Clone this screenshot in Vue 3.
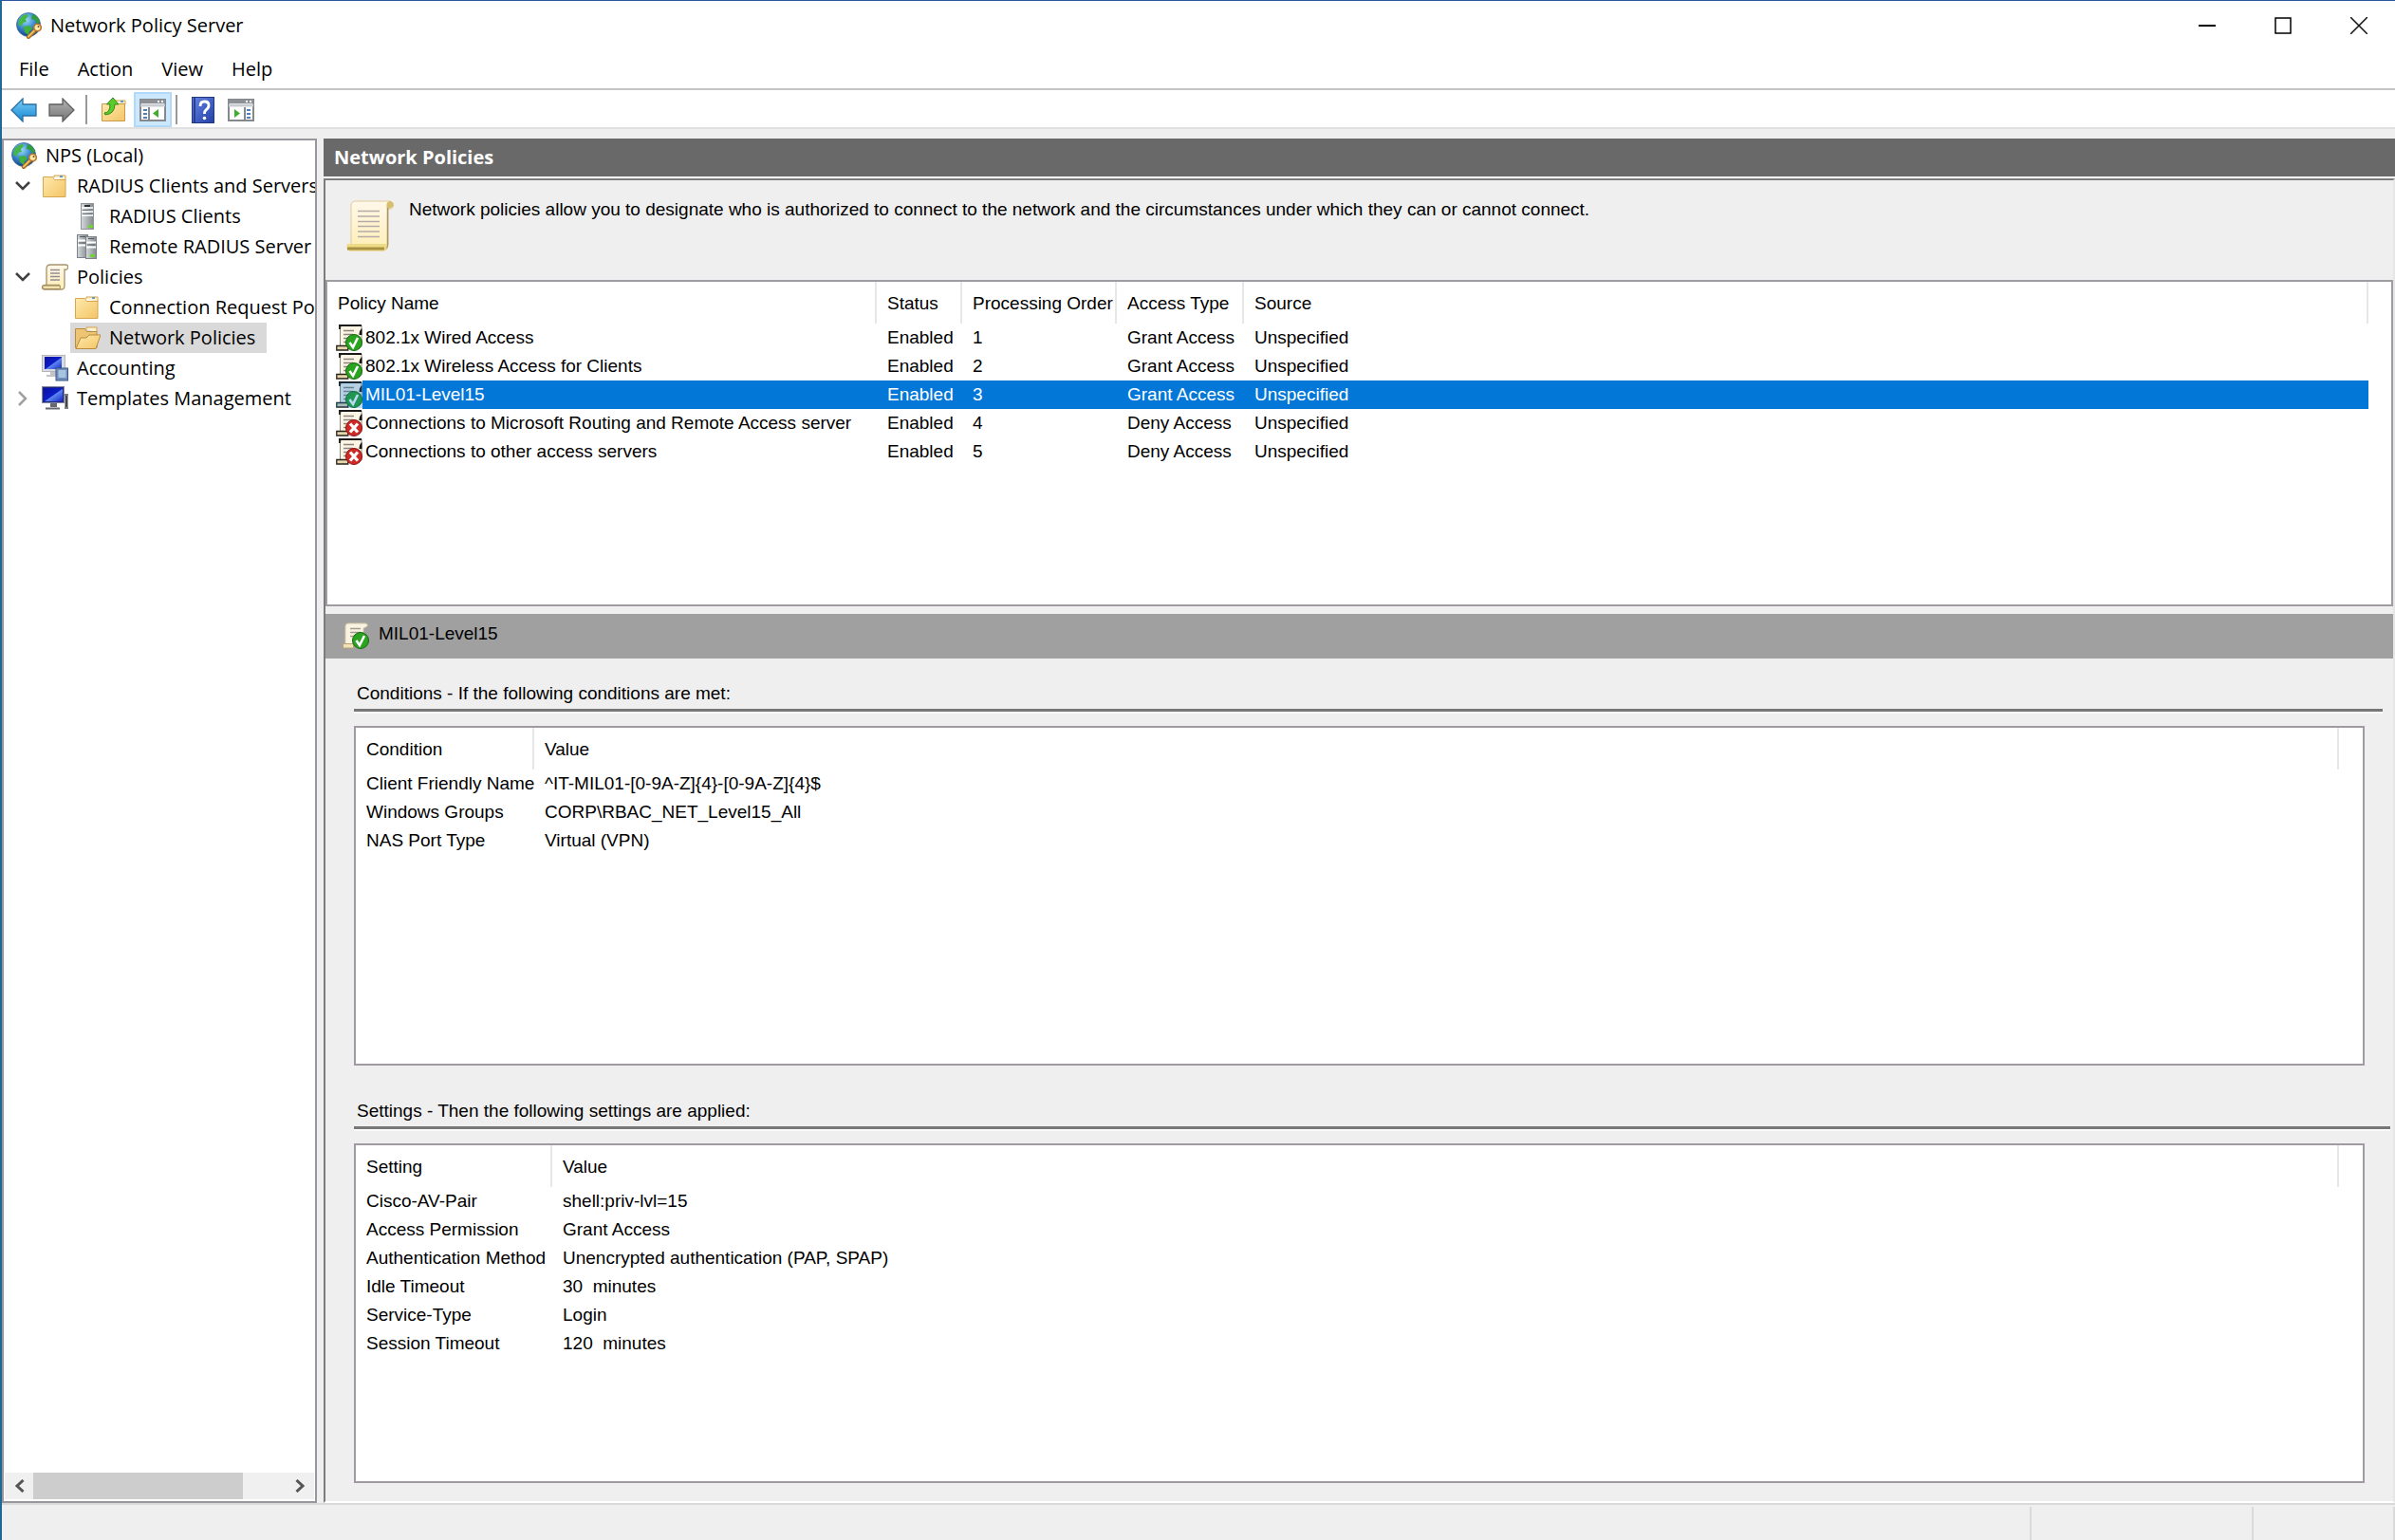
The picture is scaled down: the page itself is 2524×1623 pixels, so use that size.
<script setup>
import { ref } from 'vue'

const menus = ['File', 'Action', 'View', 'Help']

const tree = [
  { label: 'NPS (Local)', icon: 'globe', level: 0 },
  { label: 'RADIUS Clients and Servers', icon: 'folder', level: 1, toggle: 'open' },
  { label: 'RADIUS Clients', icon: 'server', level: 2 },
  { label: 'Remote RADIUS Server Groups', icon: 'servers', level: 2 },
  { label: 'Policies', icon: 'scroll', level: 1, toggle: 'open' },
  { label: 'Connection Request Policies', icon: 'folder', level: 2 },
  { label: 'Network Policies', icon: 'folder-open', level: 2, selected: true },
  { label: 'Accounting', icon: 'accounting', level: 1 },
  { label: 'Templates Management', icon: 'templates', level: 1, toggle: 'closed' },
]

const policies = [
  { name: '802.1x Wired Access', status: 'Enabled', order: 1, access: 'Grant Access', source: 'Unspecified' },
  { name: '802.1x Wireless Access for Clients', status: 'Enabled', order: 2, access: 'Grant Access', source: 'Unspecified' },
  { name: 'MIL01-Level15', status: 'Enabled', order: 3, access: 'Grant Access', source: 'Unspecified' },
  { name: 'Connections to Microsoft Routing and Remote Access server', status: 'Enabled', order: 4, access: 'Deny Access', source: 'Unspecified' },
  { name: 'Connections to other access servers', status: 'Enabled', order: 5, access: 'Deny Access', source: 'Unspecified' },
]
const selected = ref(3)

const conditions = [
  ['Client Friendly Name', '^IT-MIL01-[0-9A-Z]{4}-[0-9A-Z]{4}$'],
  ['Windows Groups', 'CORP\\RBAC_NET_Level15_All'],
  ['NAS Port Type', 'Virtual (VPN)'],
]

const settings = [
  ['Cisco-AV-Pair', 'shell:priv-lvl=15'],
  ['Access Permission', 'Grant Access'],
  ['Authentication Method', 'Unencrypted authentication (PAP, SPAP)'],
  ['Idle Timeout', '30  minutes'],
  ['Service-Type', 'Login'],
  ['Session Timeout', '120  minutes'],
]
</script>

<template>
  <div class="window">
    <svg class="sprites" width="0" height="0" aria-hidden="true">
      <defs>
        <radialGradient id="g-globe" cx="40%" cy="30%" r="70%">
          <stop offset="0" stop-color="#9fdcf7" /><stop offset=".5" stop-color="#3f8fd6" /><stop offset="1" stop-color="#123f86" />
        </radialGradient>
        <linearGradient id="g-folder" x1="0" y1="0" x2="1" y2="1">
          <stop offset="0" stop-color="#ffe9ac" /><stop offset="1" stop-color="#f3c566" />
        </linearGradient>
        <linearGradient id="g-server" x1="0" y1="0" x2="1" y2="0">
          <stop offset="0" stop-color="#d5dadd" /><stop offset="1" stop-color="#82898f" />
        </linearGradient>
        <linearGradient id="g-paper" x1="0" y1="0" x2="0" y2="1">
          <stop offset="0" stop-color="#fff8ea" /><stop offset="1" stop-color="#ffeeb4" />
        </linearGradient>
        <linearGradient id="g-screen" x1="0" y1="0" x2="1" y2="1">
          <stop offset="0" stop-color="#0a12a0" /><stop offset=".5" stop-color="#0c1cc8" /><stop offset=".55" stop-color="#5c86f0" /><stop offset="1" stop-color="#1626c8" />
        </linearGradient>
        <linearGradient id="g-back" x1="0" y1="0" x2="0" y2="1">
          <stop offset="0" stop-color="#7ccdf6" /><stop offset="1" stop-color="#1288d2" />
        </linearGradient>
        <linearGradient id="g-fwd" x1="0" y1="0" x2="0" y2="1">
          <stop offset="0" stop-color="#b4b4b4" /><stop offset="1" stop-color="#747474" />
        </linearGradient>
        <linearGradient id="g-help" x1="0" y1="0" x2="1" y2="1">
          <stop offset="0" stop-color="#6684e2" /><stop offset="1" stop-color="#2340a8" />
        </linearGradient>
      </defs>

      <symbol id="i-globe" viewBox="0 0 28 28">
        <circle cx="14" cy="13" r="12.500" fill="url(#g-globe)" stroke="#3a6a9a" stroke-width=".8" />
        <path d="M4 8c2-4 6-6 9-6l1 2-3 3 1 3-4 1-1 4-4-2z" fill="#47b649" />
        <path d="M18 2c4 1 7 4 8 8l-3 2-2-4-4-1z" fill="#2f9d3a" />
        <path d="M9 15l6-1 3 3-3 3-1 4-4-3z" fill="#3fb03a" />
        <path d="M14 26l8-8" stroke="#a8661c" stroke-width="4" stroke-linecap="round" />
        <path d="M14 25.500l8-8" stroke="#f2bf5e" stroke-width="2" stroke-linecap="round" />
        <circle cx="23.500" cy="16" r="3.800" fill="#ffe7a8" stroke="#b5742a" stroke-width="1.600" />
        <circle cx="24.500" cy="15" r="1" fill="#7a4a18" />
      </symbol>
      <symbol id="i-folder" viewBox="0 0 28 28">
        <path d="M13 5V3h12v5" fill="#fff3cf" stroke="#d5a24a" />
        <rect x="19" y="3" width="3" height="2" fill="#5b9bd0" />
        <path d="M1.500 4.500h10l2 3h11.500v18H1.500z" fill="url(#g-folder)" stroke="#d6a650" />
      </symbol>
      <symbol id="i-folder-open" viewBox="0 0 28 28">
        <path d="M13 5V3h11v5" fill="#fff3cf" stroke="#d5a24a" />
        <path d="M1.500 4.500h10l2 3h10.500v17H1.500z" fill="#ecc473" stroke="#b98b3c" />
        <path d="M2 25.500L7 14h6l3-3h12l-5 14.500z" fill="url(#g-folder)" stroke="#b98b3c" />
      </symbol>
      <symbol id="i-server" viewBox="0 0 28 28">
        <rect x="7.500" y=".5" width="13" height="27" fill="url(#g-server)" stroke="#8e9499" />
        <path d="M8 5h12M8 9h12M8 13h12" stroke="#fff" stroke-width="1.500" />
        <path d="M11 3h6" stroke="#2c3236" stroke-width="2" />
        <path d="M9 7.500h10M9 11.500h10" stroke="#6e767c" />
        <rect x="15" y="23" width="5" height="3" fill="#6fd42c" />
      </symbol>
      <symbol id="i-servers" viewBox="0 0 28 28">
        <rect x="3.500" y="1.500" width="11" height="24" fill="url(#g-server)" stroke="#7c8388" />
        <path d="M4 7.500h10M4 12.500h10" stroke="#fff" stroke-width="2" />
        <path d="M6 3.500h6M5 10h8" stroke="#4e565c" />
        <rect x="12.500" y="3.500" width="11" height="23" fill="url(#g-server)" stroke="#7c8388" />
        <path d="M13 9.500h10M13 14.500h10" stroke="#fff" stroke-width="2" />
        <path d="M15 5.500h6M14 12h8" stroke="#4e565c" />
        <rect x="17" y="22" width="5" height="3" fill="#6fd42c" />
      </symbol>
      <symbol id="i-scroll" viewBox="0 0 28 28">
        <path d="M5 24V5q0-4 4-4h16q3 0 2.500 3T24 6v17q0 4-3 4H3q-2.500 0-2.500-2T3 22.500h16" fill="url(#g-paper)" stroke="#a5936f" stroke-width="1.300" />
        <path d="M.8 23h18.500v3.500H2q-1.500-1-1.200-3.500z" fill="#f3e2ae" stroke="#a08a5c" />
        <path d="M9 6.500h10M9 10h10M9 13.500h10M9 17h10" stroke="#958a94" stroke-width="1.300" />
      </symbol>
      <symbol id="i-scroll-lg" viewBox="0 0 50 54">
        <path d="M5 46V6q0-5 5-5h36q4 1 3.500 5T44 9v38q0 5-4 6H3" fill="url(#g-paper)" stroke="#e0ca9a" />
        <path d="M43 9q-2-6 2-8 5 0 4.500 5-2 3-6.500 3z" fill="#d6bf6c" />
        <path d="M43.500 8v38q0 5-4 6" fill="none" stroke="#a89468" stroke-width="1.500" />
        <path d="M.5 46h42v5q-1 2.500-3 2.500H3q-3-1-2.500-7.500z" fill="#eedb86" />
        <path d="M1 51h39" stroke="#a89142" stroke-width="3" />
        <path d="M12 11.500h23M12 17h23M12 22.500h23M12 27.500h23M12 33h23M12 38.500h23" stroke="#b5aaa8" stroke-width="1.500" />
      </symbol>
      <symbol id="i-accounting" viewBox="0 0 28 28">
        <rect x=".5" y=".5" width="24" height="17" fill="#d9dade" stroke="#b6b7bd" />
        <rect x="3" y="2" width="18" height="13" fill="url(#g-screen)" />
        <path d="M9 18h7v3H9zM5 21h12v2H5z" fill="#c4c4c8" />
        <rect x="15" y="14" width="12.500" height="13" fill="#6f8fba" stroke="#3c5a86" />
        <rect x="17.500" y="16" width="8" height="8" fill="#a9c3e2" />
      </symbol>
      <symbol id="i-templates" viewBox="0 0 28 28">
        <rect x=".5" y="1.500" width="23" height="17" fill="#20267a" stroke="#8488a8" />
        <rect x="2" y="3" width="20" height="14" fill="url(#g-screen)" />
        <path d="M9 19h7v4H9zM4 23.500h15v2H4z" fill="#66686e" />
        <path d="M26 9v16" stroke="#44464c" stroke-width="3" />
        <path d="M24 10h4M24 24h4" stroke="#7a7c82" stroke-width="2" />
      </symbol>
      <symbol id="i-policy" viewBox="0 0 28 28">
        <path class="paper" d="M4.500 24V4q0-3 3-3H27v22H4.500" fill="#fbf5e6" stroke="#8d8878" />
        <path d="M3 1h24M4 1v4" fill="none" stroke="#1c1a18" stroke-width="1.800" />
        <path d="M27.500 4v7h-3q0-5 3-7z" fill="#17140f" />
        <path d="M8 6.500h11M8 10.500h10M8 14.500h8M8 18.500h4" stroke="#8e857e" stroke-width="1.300" />
        <path d="M.8 22.500h12v4.500H.8z" fill="#e6d6ae" stroke="#2a241a" stroke-width="1.300" />
      </symbol>
      <symbol id="i-policy-soft" viewBox="0 0 28 28">
        <path d="M3 24V4q0-3 3-3h17q4 0 3 3l-4 2v18" fill="#fbf3e2" stroke="#d6c8a8" />
        <path d="M8 6.500h11M8 10.500h11M8 14.500h8" stroke="#a49a94" stroke-width="1.300" />
        <path d="M.5 22.500h11v4.500H.5z" fill="#f1e1b8" stroke="#b8a070" />
      </symbol>
      <symbol id="i-grant" viewBox="0 0 28 28">
        <circle cx="19" cy="19" r="8.500" fill="#2aa31f" stroke="#17690f" />
        <path d="M14.500 19l3.500 5 5-10" fill="none" stroke="#fff" stroke-width="2.600" />
      </symbol>
      <symbol id="i-deny" viewBox="0 0 28 28">
        <circle cx="19" cy="19" r="8.500" fill="#cf2a26" stroke="#8c1412" />
        <path d="M15 14.500l8 9M23 14.500l-8 9" stroke="#fff" stroke-width="3.200" />
      </symbol>
      <symbol id="i-tint" viewBox="0 0 28 28">
        <path d="M4 1h24v27H12v-1H0v-5h4z" fill="#0377d8" opacity=".28" />
      </symbol>
      <symbol id="i-back" viewBox="0 0 28 26">
        <path d="M1 13L13 1v6h14v12H13v6z" fill="url(#g-back)" stroke="#2a6fa4" stroke-width="1.300" />
      </symbol>
      <symbol id="i-fwd" viewBox="0 0 28 26">
        <path d="M27 13L15 1v6H1v12h14v6z" fill="url(#g-fwd)" stroke="#5e5e5e" stroke-width="1.300" />
      </symbol>
      <symbol id="i-up" viewBox="0 0 28 28">
        <path d="M14 6V4h11v4" fill="#fff3cf" stroke="#d5a24a" />
        <rect x="20" y="4" width="3" height="2" fill="#5b9bd0" />
        <path d="M.5 7.500h24v18H.5z" fill="url(#g-folder)" stroke="#c89a48" />
        <path d="M3 17q6 0 6-9H5.500L12 1l6 7h-4q0 10-10 11z" fill="#5ccb2c" stroke="#2f8a16" />
      </symbol>
      <symbol id="i-pane-left" viewBox="0 0 28 24">
        <rect x="1" y="1" width="26" height="22" fill="#fff" stroke="#85888c" stroke-width="2" />
        <path d="M1 3h26" stroke="#8d9196" stroke-width="4" />
        <path d="M19 3h2M23 3h2" stroke="#fff" stroke-width="2" />
        <path d="M1 7h26" stroke="#c9ccd0" stroke-width="3" />
        <path d="M10 9v13" stroke="#85888c" stroke-width="2" />
        <path d="M4 12h4M4 16h4M4 20h4" stroke="#4f7fb8" stroke-width="2" />
        <path d="M20 11v9l-6-4.500z" fill="#3fae2c" />
      </symbol>
      <symbol id="i-pane-right" viewBox="0 0 28 24">
        <rect x="1" y="1" width="26" height="22" fill="#fff" stroke="#85888c" stroke-width="2" />
        <path d="M1 3h26" stroke="#8d9196" stroke-width="4" />
        <path d="M19 3h2M23 3h2" stroke="#fff" stroke-width="2" />
        <path d="M1 7h26" stroke="#c9ccd0" stroke-width="3" />
        <path d="M18 9v13" stroke="#85888c" stroke-width="2" />
        <path d="M20 12h4M20 16h4M20 20h4" stroke="#4f7fb8" stroke-width="2" />
        <path d="M7 11v9l6-4.500z" fill="#3fae2c" />
      </symbol>
      <symbol id="i-help" viewBox="0 0 24 28">
        <rect x=".5" y=".5" width="23" height="27" fill="url(#g-help)" stroke="#22367c" />
        <path d="M3 1v26" stroke="#24409c" stroke-width="2" />
        <path d="M9 10q0-5 4.500-5t4.500 4q0 3-3 5-1.500 1-1.500 4" fill="none" stroke="#fff" stroke-width="2.800" />
        <circle cx="13.500" cy="22.500" r="1.800" fill="#fff" />
      </symbol>
    </svg>

    <header class="titlebar">
      <svg class="icon"><use href="#i-globe" /></svg>
      <h1>Network Policy Server</h1>
      <div class="controls">
        <button type="button" aria-label="Minimize">
          <svg width="18" height="18" viewBox="0 0 18 18"><path d="M0 9h18" stroke="#000" stroke-width="2" /></svg>
        </button>
        <button type="button" aria-label="Maximize">
          <svg width="18" height="18" viewBox="0 0 18 18"><rect x="1" y="1" width="16" height="16" fill="none" stroke="#000" stroke-width="1.500" /></svg>
        </button>
        <button type="button" aria-label="Close">
          <svg width="18" height="18" viewBox="0 0 18 18"><path d="M0 0l18 18M18 0L0 18" stroke="#111" stroke-width="1.500" /></svg>
        </button>
      </div>
    </header>

    <nav class="menubar">
      <button v-for="m in menus" :key="m" type="button">{{ m }}</button>
    </nav>

    <div class="toolbar" role="toolbar">
      <button type="button" aria-label="Back"><svg width="28" height="26"><use href="#i-back" /></svg></button>
      <button type="button" aria-label="Forward"><svg width="28" height="26"><use href="#i-fwd" /></svg></button>
      <span class="divider"></span>
      <button type="button" aria-label="Up one level"><svg class="icon"><use href="#i-up" /></svg></button>
      <button type="button" class="active" aria-label="Show or hide console tree"><svg width="28" height="24"><use href="#i-pane-left" /></svg></button>
      <span class="divider tight"></span>
      <button type="button" aria-label="Help"><svg width="24" height="28"><use href="#i-help" /></svg></button>
      <button type="button" aria-label="Show or hide action pane"><svg width="28" height="24"><use href="#i-pane-right" /></svg></button>
    </div>

    <div class="body">
      <aside class="sidebar">
        <ul class="tree" role="tree">
          <li v-for="n in tree" :key="n.label" role="treeitem" :class="['node', 'level-' + n.level, { selected: n.selected }]">
            <span class="toggle">
              <svg v-if="n.toggle === 'open'" width="16" height="10" viewBox="0 0 16 10"><path d="M1 1l7 7 7-7" fill="none" stroke="#404040" stroke-width="2.500" /></svg>
              <svg v-else-if="n.toggle" width="10" height="16" viewBox="0 0 10 16"><path d="M1 1l7 7-7 7" fill="none" stroke="#a0a0a0" stroke-width="2.500" /></svg>
            </span>
            <span class="entry">
              <svg class="icon"><use :href="'#i-' + n.icon" /></svg>
              <span>{{ n.label }}</span>
            </span>
          </li>
        </ul>
        <div class="scrollbar">
          <button type="button" aria-label="Scroll left"><svg width="11" height="14" viewBox="0 0 11 14"><path d="M9.500 1L3 7l6.500 6" fill="none" stroke="#555" stroke-width="3" /></svg></button>
          <div class="track"><div class="thumb"></div></div>
          <button type="button" aria-label="Scroll right"><svg width="11" height="14" viewBox="0 0 11 14"><path d="M1.500 1L8 7l-6.500 6" fill="none" stroke="#555" stroke-width="3" /></svg></button>
        </div>
      </aside>

      <main class="content">
        <h2 class="heading">Network Policies</h2>
        <div class="pane">
          <div class="intro">
            <svg width="50" height="54"><use href="#i-scroll-lg" /></svg>
            <p>Network policies allow you to designate who is authorized to connect to the network and the circumstances under which they can or cannot connect.</p>
          </div>

          <div class="list policies">
            <table>
              <colgroup>
                <col class="c-icon" /><col class="c-name" /><col class="c-status" /><col class="c-order" /><col class="c-access" /><col /><col class="c-end" />
              </colgroup>
              <thead>
                <tr>
                  <th colspan="2">Policy Name</th><th>Status</th><th>Processing Order</th><th>Access Type</th><th>Source</th><td></td>
                </tr>
              </thead>
              <tbody>
                <tr v-for="p in policies" :key="p.order" :class="{ selected: p.order === selected }" @click="selected = p.order">
                  <td class="mark">
                    <svg class="icon">
                      <use href="#i-policy" />
                      <use :href="p.access === 'Grant Access' ? '#i-grant' : '#i-deny'" />
                      <use v-if="p.order === selected" href="#i-tint" />
                    </svg>
                  </td>
                  <td class="name">{{ p.name }}</td>
                  <td>{{ p.status }}</td>
                  <td>{{ p.order }}</td>
                  <td>{{ p.access }}</td>
                  <td>{{ p.source }}</td>
                  <td class="end"></td>
                </tr>
              </tbody>
            </table>
          </div>

          <h3 class="subject">
            <svg class="icon"><use href="#i-policy-soft" /><use href="#i-grant" /></svg>
            <span>{{ policies[selected - 1].name }}</span>
          </h3>

          <section class="details">
            <h4>Conditions - If the following conditions are met:</h4>
            <div class="list">
              <table>
                <colgroup><col class="c-condition" /><col /><col class="c-edge" /></colgroup>
                <thead><tr><th>Condition</th><th>Value</th><td></td></tr></thead>
                <tbody>
                  <tr v-for="c in conditions" :key="c[0]"><td>{{ c[0] }}</td><td>{{ c[1] }}</td><td></td></tr>
                </tbody>
              </table>
            </div>
          </section>

          <section class="details wide">
            <h4>Settings - Then the following settings are applied:</h4>
            <div class="list">
              <table>
                <colgroup><col class="c-setting" /><col /><col class="c-edge" /></colgroup>
                <thead><tr><th>Setting</th><th>Value</th><td></td></tr></thead>
                <tbody>
                  <tr v-for="s in settings" :key="s[0]"><td>{{ s[0] }}</td><td>{{ s[1] }}</td><td></td></tr>
                </tbody>
              </table>
            </div>
          </section>
        </div>
      </main>
    </div>

    <footer class="statusbar"><span></span><span></span><span></span></footer>
  </div>
</template>

<style>
body {
  margin: 0;
}
</style>

<style scoped>
.window {
  display: flex;
  flex-direction: column;
  height: 100vh;
  box-sizing: border-box;
  border-top: 1px solid #2b559c;
  border-left: 2px solid #1f6a94;
  background: #efefef;
  color: #000;
  font: 20px/30px "Open Sans", "Noto Sans", sans-serif;
  overflow: hidden;
}
.sprites {
  position: absolute;
}
.icon {
  width: 28px;
  height: 28px;
  flex: none;
}
h1, h2, h3, h4, p, ul {
  margin: 0;
  padding: 0;
  font-size: inherit;
  font-weight: 400;
}
button {
  display: flex;
  align-items: center;
  justify-content: center;
  padding: 0;
  border: 0;
  background: none;
  color: inherit;
  font: inherit;
}

.titlebar {
  display: flex;
  flex: none;
  align-items: center;
  gap: 9px;
  height: 51px;
  padding-left: 14px;
  background: #fff;
}
.controls {
  display: flex;
  gap: 4px;
  align-self: stretch;
  margin-left: auto;
}
.controls button {
  width: 76px;
}

.menubar {
  display: flex;
  flex: none;
  height: 41px;
  padding-left: 3px;
  background: #fff;
  border-bottom: 2px solid #c4c4c4;
}
.menubar button {
  padding: 0 15px;
}

.toolbar {
  display: flex;
  flex: none;
  align-items: center;
  height: 37px;
  padding: 2px 0 0 3px;
  background: #fff;
  border-bottom: 2px solid #e0e0e0;
}
.toolbar button {
  box-sizing: border-box;
  width: 40px;
  height: 37px;
}
.toolbar .active {
  background: #cce8ff;
  border: 2px solid #b2daf8;
}
.divider {
  width: 2px;
  height: 31px;
  margin: 0 9px 0 5px;
  background: #999;
}
.divider.tight {
  margin: 0 7px 0 4px;
}

.body {
  display: flex;
  flex: 1;
  min-height: 0;
  padding-top: 10px;
}

.sidebar {
  display: flex;
  flex: none;
  flex-direction: column;
  box-sizing: border-box;
  width: 332px;
  border: 2px solid #99969e;
  background: #fff;
}
.tree {
  flex: 1;
  overflow: hidden;
  list-style: none;
}
.node {
  display: flex;
  align-items: center;
  height: 32px;
  overflow: hidden;
  white-space: nowrap;
}
.toggle {
  display: flex;
  flex: none;
  justify-content: center;
  box-sizing: border-box;
  width: 36px;
  padding-left: 3px;
}
.level-0 .toggle {
  width: 3px;
}
.level-2 .toggle {
  width: 70px;
}
.entry {
  display: flex;
  align-items: center;
  gap: 9px;
  height: 32px;
  padding: 0 12px 0 4px;
}
.selected .entry {
  background: #d9d9d9;
}
.scrollbar {
  display: flex;
  flex: none;
  height: 28px;
  margin: 0 1px 2px;
  background: #f0f0f0;
}
.scrollbar button {
  width: 30px;
}
.track {
  flex: 1;
}
.thumb {
  width: 83%;
  height: 100%;
  background: #cdcdcd;
}

.content {
  display: flex;
  flex: 1;
  flex-direction: column;
  min-width: 0;
  margin-left: 7px;
}
.heading {
  flex: none;
  height: 40px;
  padding-left: 11px;
  background: #696969;
  border-bottom: 2px solid #fff;
  color: #fff;
  font-weight: 700;
  line-height: 40px;
}
.pane {
  display: flex;
  flex: 1;
  flex-direction: column;
  min-height: 0;
  border: 2px solid #7c7c7c;
  border-right-color: #e6e6e6;
  border-bottom-color: #fff;
  font: 19px/30px "Liberation Sans", Arial, sans-serif;
}
.intro {
  display: flex;
  flex: none;
  gap: 16px;
  box-sizing: border-box;
  height: 105px;
  padding: 21px 0 0 22px;
}
.intro p {
  margin-top: -5px;
}
.list {
  box-sizing: border-box;
  border: 2px solid #a09ba3;
  background: #fff;
  overflow: hidden;
}
.policies {
  flex: 0 0 344px;
}

table {
  width: 100%;
  table-layout: fixed;
  border-spacing: 0;
}
th {
  height: 43px;
  padding: 1px 0 0 11px;
  border-right: 2px solid #e7e7e7;
  font-weight: 400;
  text-align: left;
  white-space: nowrap;
}
thead td {
  padding: 0;
}
tbody td {
  height: 30px;
  padding: 0 0 0 11px;
  white-space: pre;
}
.c-icon { width: 37px; }
.c-name { width: 542px; }
.c-status { width: 90px; }
.c-order { width: 163px; }
.c-access { width: 134px; }
.c-end { width: 24px; }
.c-condition { width: 188px; }
.c-setting { width: 207px; }
.c-edge { width: 25px; }
tbody .mark {
  padding: 0 0 0 9px;
}
.mark .icon {
  display: block;
}
tbody .name {
  padding-left: 3px;
}
tr.selected td:not(.mark):not(.end) {
  background: #0377d8;
  color: #fff;
}

.subject {
  display: flex;
  flex: none;
  gap: 10px;
  box-sizing: border-box;
  height: 47px;
  margin-top: 8px;
  padding-left: 18px;
  background: #a0a0a0;
}
.subject .icon {
  margin-top: 9px;
}
.subject span {
  line-height: 41px;
}

.details {
  display: flex;
  flex: 1 1 0;
  flex-direction: column;
  box-sizing: content-box;
  min-height: 0;
  padding: 22px 0 0 30px;
}
.details h4 {
  flex: none;
  height: 31px;
  margin-right: 11px;
  padding-left: 3px;
  border-bottom: 3px solid #777;
  box-shadow: 0 2px 0 #fafafa;
}
.details.wide {
  padding-top: 33px;
  padding-bottom: 19px;
}
.details.wide h4 {
  margin-right: 3px;
}
.details .list {
  flex: 1;
  margin: 15px 30px 0 0;
}

.statusbar {
  display: flex;
  flex: none;
  justify-content: flex-end;
  height: 35px;
  padding-top: 2px;
  border-top: 2px solid #d9d9d9;
}
.statusbar span {
  box-sizing: border-box;
  width: 149px;
  border-right: 2px solid #dadada;
}
.statusbar span:nth-child(2) {
  width: 234px;
}
</style>
